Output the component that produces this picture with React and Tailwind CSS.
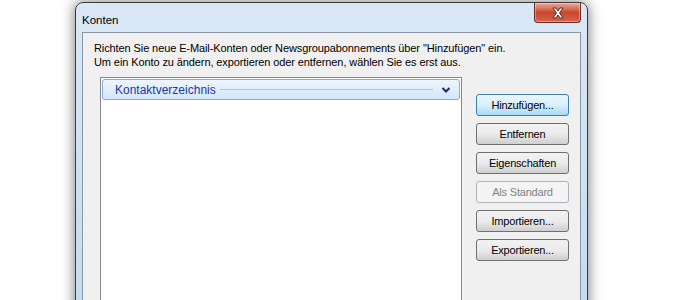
import React from 'react';

const buttons = [
  { label: 'Hinzufügen...', kind: 'hot' },
  { label: 'Entfernen', kind: 'normal' },
  { label: 'Eigenschaften', kind: 'normal' },
  { label: 'Als Standard', kind: 'disabled' },
  { label: 'Importieren...', kind: 'normal' },
  { label: 'Exportieren...', kind: 'normal' },
];

const buttonStyles = {
  hot: 'border-[#3c7fb1] bg-gradient-to-b from-[#eaf6fd] via-[#d9f0fc] to-[#a7d9f5] text-black',
  normal: 'border-[#707070] bg-gradient-to-b from-[#f2f2f2] via-[#ebebeb] to-[#cfcfcf] text-black',
  disabled: 'border-[#adb2b5] bg-[#f4f4f4] text-[#838383]',
};

const CloseButton = () => (
  <div className="w-[47px] h-[20px] rounded-b-[4px] border border-t-0 border-[#6b2a22] bg-gradient-to-b from-[#e9a99b] via-[#c9452d] to-[#d4644c] flex items-center justify-center shadow-[inset_0_0_0_1px_rgba(255,255,255,0.35)]">
    <svg width="14" height="12" viewBox="0 0 14 12">
      <path
        d="M2 1 L5 1 L7 4 L9 1 L12 1 L8.5 6 L12 11 L9 11 L7 8 L5 11 L2 11 L5.5 6 Z"
        fill="#ffffff"
        stroke="#4a2320"
        strokeWidth="0.9"
        strokeLinejoin="round"
      />
    </svg>
  </div>
);

const App = () => {
  return (
    <div className="w-[700px] h-[300px] overflow-hidden bg-white" style={{ fontFamily: '"Liberation Sans", Arial, sans-serif' }}>
      <div className="ml-[75px] mt-[2px] w-[513px] h-[320px] rounded-t-[8px] border border-[#3a3a3a] bg-gradient-to-b from-[#dae7f5] via-[#cfe1f4] to-[#c3daf3] px-[6px] shadow-[0_0_14px_rgba(0,0,0,0.55)]">
        {/* Title bar */}
        <div className="h-[29px] flex justify-between">
          <div className="pt-[10px] text-[11.5px] leading-[14px] text-black">Konten</div>
          <CloseButton />
        </div>

        {/* Client area */}
        <div className="h-[300px] border border-[#8a96a6] bg-[#f0f0f0] pl-[11px] pt-[8px]">
          <div className="text-[11px] leading-[14px] tracking-[-0.1px] text-black">
            <p>Richten Sie neue E-Mail-Konten oder Newsgroupabonnements über "Hinzufügen" ein.</p>
            <p>Um ein Konto zu ändern, exportieren oder entfernen, wählen Sie es erst aus.</p>
          </div>

          <div className="flex mt-[8px]">
            {/* List */}
            <div className="ml-[6px] w-[362px] h-[240px] border border-[#828790] bg-white p-[1px]">
              <div className="h-[21px] rounded-[3px] border border-[#84acdd] bg-gradient-to-b from-[#eef5fd] to-[#d3e6fb] flex items-center pl-[12px] pr-[9px]">
                <span className="text-[12px] text-[#1c3a9e] whitespace-nowrap">Kontaktverzeichnis</span>
                <div className="flex-1 h-px bg-[#a9c7ec] ml-[4px] mr-[9px]" />
                <svg width="8" height="6" viewBox="0 0 8 6">
                  <path d="M0.5 1 L4 4.5 L7.5 1" fill="none" stroke="#1c2f7a" strokeWidth="2" />
                </svg>
              </div>
            </div>

            {/* Buttons */}
            <div className="ml-[14px] mt-[17px] flex flex-col gap-[7px]">
              {buttons.map((b) => (
                <div
                  key={b.label}
                  className={`w-[93px] h-[22px] rounded-[3px] border flex items-center justify-center text-[11px] tracking-[-0.2px] ${buttonStyles[b.kind]}`}
                >
                  {b.label}
                </div>
              ))}
            </div>
          </div>
        </div>
      </div>
    </div>
  );
};

export default App;
